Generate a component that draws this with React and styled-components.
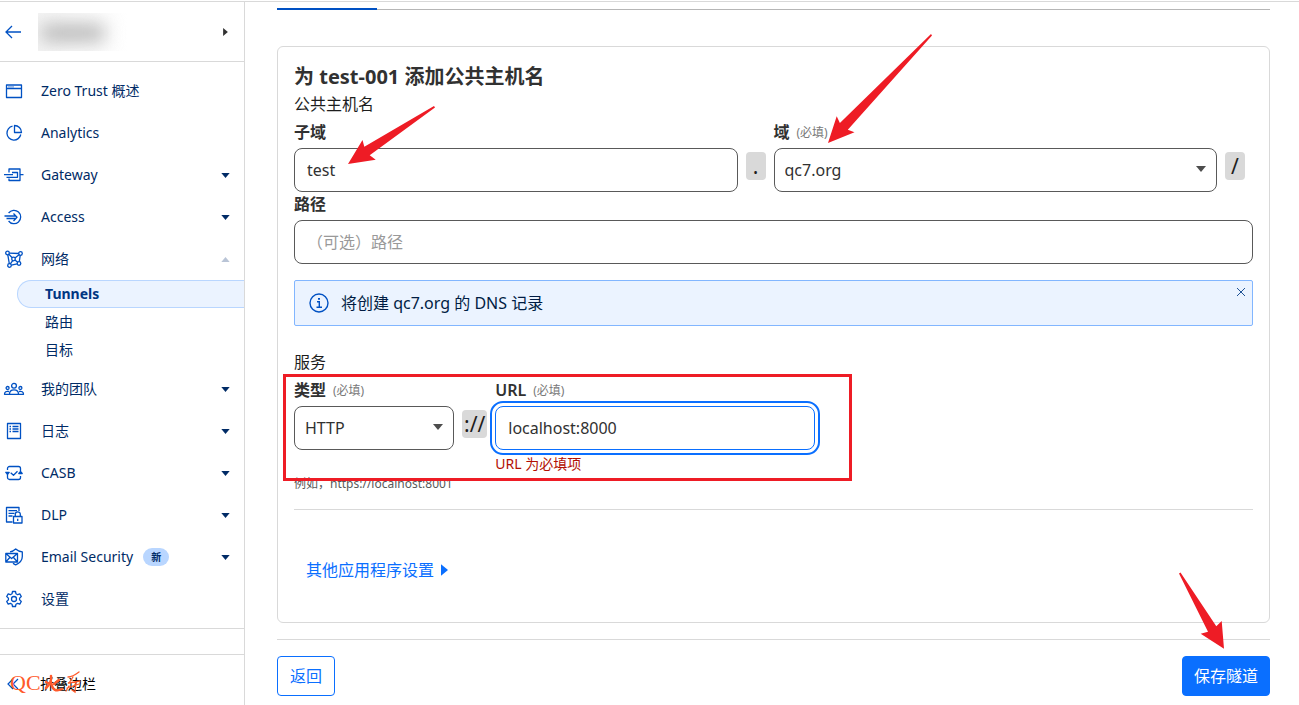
import styled, { createGlobalStyle } from "styled-components";

const GlobalStyle = createGlobalStyle`
  *, *::before, *::after {
    box-sizing: border-box;
  }
  body {
    margin: 0;
    background: #fff;
    color: #313131;
    font-family: "Noto Sans", "Noto Sans CJK SC", sans-serif;
    font-size: 16px;
    line-height: 24px;
  }
  button, input, select {
    font: inherit;
    color: inherit;
  }
  h1, h2, p, ul, hr {
    margin: 0;
    padding: 0;
  }
  ul {
    list-style: none;
  }
`;

const Page = styled.div`
  display: flex;
  min-height: 100vh;
  padding-top: 1px;
`;

/************** Sidebar **************/
const Sidebar = styled.aside`
  display: flex;
  flex-direction: column;
  flex: 0 0 245px;
  border-top: 1px solid #d9d9d9;
  border-right: 1px solid #d9d9d9;
  color: #002b66;
  font-size: 14px;
  line-height: 20px;
`;

const AccountBar = styled.div`
  display: flex;
  align-items: center;
  justify-content: space-between;
  height: 60px;
  padding: 0 16px 0 5px;
  border-bottom: 1px solid #d9d9d9;
`;

const IconButton = styled.button`
  display: flex;
  padding: 0;
  border: 0;
  background: none;
  color: ${({ $color }) => $color || "#0051c3"};
  cursor: pointer;
`;

const AccountName = styled.div`
  flex: 1;
  height: 38px;
  margin: 0 16px;
  overflow: hidden;
  background: linear-gradient(90deg, #f4f4f4, #fff 90px);
  &::before {
    content: "";
    display: block;
    width: 62px;
    height: 16px;
    margin: 12px 4px;
    background: #b3b3b3;
    filter: blur(9px);
  }
`;

const NavList = styled.ul`
  padding: 8px 0;
  border-bottom: 1px solid #d9d9d9;
`;

const NavLink = styled.a`
  display: flex;
  align-items: center;
  height: 42px;
  padding: 0 14px 0 5px;
  color: inherit;
  text-decoration: none;
  & .icon {
    flex: none;
    margin-right: 18px;
    overflow: visible;
    color: #0051c3;
  }
  & .caret {
    width: 9px;
    height: 5px;
    margin-left: auto;
  }
`;

const SubList = styled.ul`
  margin-bottom: 4px;
  padding-left: 17px;
`;

const SubLink = styled.a`
  display: flex;
  align-items: center;
  height: 28px;
  padding-left: 27px;
  border: 1px solid ${({ $active }) => ($active ? "#b9d6ff" : "transparent")};
  border-right: 0;
  border-radius: 14px 0 0 14px;
  background: ${({ $active }) => ($active ? "#ebf3ff" : "transparent")};
  color: ${({ $active }) => ($active ? "#003682" : "#002b66")};
  font-weight: ${({ $active }) => ($active ? 700 : 400)};
  text-decoration: none;
`;

const NewBadge = styled.span`
  margin-left: 10px;
  padding: 0 8px;
  border-radius: 9px;
  background: #b9d6ff;
  font-size: 10px;
  font-weight: 700;
  line-height: 18px;
`;

const SidebarFooter = styled.div`
  position: relative;
  flex: 1;
  margin-top: 25px;
  padding: 19px 7px 0;
  border-top: 1px solid #d9d9d9;
`;

const CollapseButton = styled.button`
  display: flex;
  align-items: center;
  gap: 18px;
  padding: 0;
  border: 0;
  background: none;
  color: #000;
  cursor: pointer;
  & svg {
    color: #0051c3;
  }
`;

const Watermark = styled.div`
  position: absolute;
  top: 13px;
  left: 10px;
  display: flex;
  align-items: center;
  color: #ff5a2b;
  font-family: "Liberation Serif", serif;
  font-size: 22px;
  line-height: 30px;
  pointer-events: none;
`;

/************** Main form **************/
const Main = styled.main`
  flex: 1;
  min-width: 0;
  padding: 0 29px 0 32px;
  border-top: 1px solid #d9d9d9;
`;

const TabBar = styled.div`
  height: 8px;
  border-bottom: 1px solid #b6b6b6;
  &::before {
    content: "";
    display: block;
    width: 100px;
    height: 8px;
    border-bottom: 2px solid #0051c3;
  }
`;

const Card = styled.section`
  margin-top: 36px;
  padding: 16px 16px 40px;
  border: 1px solid #d9d9d9;
  border-radius: 6px;
`;

const Title = styled.h1`
  margin-bottom: 1px;
  font-size: 20px;
  font-weight: 700;
  line-height: 28px;
`;

const SectionName = styled.p`
  color: #1d1d1d;
  padding-top: ${({ $top }) => $top || 0}px;
  padding-bottom: 4px;
`;

const FieldRow = styled.div`
  position: relative;
  display: flex;
  align-items: flex-start;
  gap: 8px;
  padding-right: ${({ $right }) => $right || 0}px;
`;

const Field = styled.div`
  position: relative;
  flex: ${({ $width }) => ($width ? `0 0 ${$width}px` : "1 1 0")};
  min-width: 0;
`;

const Label = styled.label`
  display: flex;
  align-items: center;
  gap: 7px;
  height: 28px;
  padding-bottom: 4px;
  font-weight: 600;
  & span {
    padding-top: 2px;
    color: #797979;
    font-size: 12px;
    font-weight: 400;
  }
`;

const TextInput = styled.input`
  display: block;
  width: 100%;
  height: 44px;
  padding: 0 12px;
  border: 1px solid ${({ $focused }) => ($focused ? "#0a6fff" : "#595959")};
  border-radius: 8px;
  outline: ${({ $focused }) => ($focused ? "2px solid #0a6fff" : "none")};
  outline-offset: 3px;
  background: #fff;
  &::placeholder {
    color: #999;
    opacity: 1;
  }
`;

const SelectBox = styled.div`
  position: relative;
  & select {
    display: block;
    width: 100%;
    height: 44px;
    padding: 0 32px 0 10px;
    border: 1px solid #595959;
    border-radius: 8px;
    background: #fff;
    appearance: none;
  }
  & svg {
    position: absolute;
    top: 18px;
    right: 11px;
    color: #4d4d4d;
    pointer-events: none;
  }
`;

const Separator = styled.span`
  min-width: 20px;
  height: 28px;
  margin-top: 32px;
  padding: 0 2px;
  border-radius: 4px;
  background: #d9d9d9;
  color: #1d1d1d;
  font-size: 21px;
  line-height: 28px;
  text-align: center;
`;

const Notice = styled.div`
  display: flex;
  align-items: flex-start;
  gap: 12px;
  margin-top: 16px;
  padding: 6px 6px 6px 14px;
  border: 1px solid #82b6ff;
  border-radius: 2px;
  background: #ebf3ff;
  color: #001c43;
  & p {
    flex: 1;
    padding: 4px 0;
  }
  & > svg {
    margin-top: 6px;
    color: #0051c3;
  }
`;

const ErrorText = styled.p`
  padding-top: 4px;
  color: #b20f03;
  font-size: 14px;
  line-height: 20px;
`;

const Hint = styled.p`
  color: #595959;
  font-size: 12px;
  line-height: 20px;
`;

const Divider = styled.hr`
  height: 1px;
  margin-top: ${({ $top }) => $top}px;
  border: 0;
  background: #d9d9d9;
`;

const MoreButton = styled.button`
  display: flex;
  align-items: center;
  gap: 7px;
  margin-top: 48px;
  padding: 0 12px;
  border: 0;
  background: none;
  color: #0a6fff;
  cursor: pointer;
`;

const Actions = styled.div`
  position: relative;
  display: flex;
  justify-content: space-between;
  padding-top: 16px;
`;

const Button = styled.button`
  height: 40px;
  padding: 0 ${({ $primary }) => ($primary ? 11 : 12)}px;
  border: 1px solid #0a6fff;
  border-radius: 4px;
  background: ${({ $primary }) => ($primary ? "#0a6fff" : "#fff")};
  color: ${({ $primary }) => ($primary ? "#fff" : "#0a6fff")};
  cursor: pointer;
`;

/************** Annotations over the form **************/
const Highlight = styled.div`
  position: absolute;
  top: -4px;
  left: -11px;
  width: 569px;
  height: 107px;
  border: 3px solid #ee1c25;
  pointer-events: none;
`;

const Arrow = styled.svg`
  position: absolute;
  z-index: 1;
  top: ${({ $top }) => $top}px;
  left: ${({ $left }) => ($left === undefined ? "auto" : `${$left}px`)};
  right: ${({ $right }) => ($right === undefined ? "auto" : `${$right}px`)};
  fill: #ee1c25;
  pointer-events: none;
`;

const icons = {
  window: (
    <>
      <path d="M1.500 3h15v12.500h-15zM1.500 6.500h15" />
      <path d="M3.500 4.800h1M5.500 4.800h1M7.500 4.800h1" />
    </>
  ),
  chart: (
    <>
      <path d="M7.500 2.200A7 7 0 1 0 15.800 10.500" />
      <path d="M9.500 1.500v7h7a7 7 0 0 0-7-7z" />
    </>
  ),
  gateway: (
    <path d="M4 6.500V3h11v11.500H4V12.500M15 8.700h3.500M-1 8.700H8M1.500 11.300h11V6.500H7" />
  ),
  access: (
    <>
      <path d="M3.600 5A6.700 6.700 0 1 1 3.600 13" />
      <path d="M-.5 8H11M1.500 10.500H11M8.500 5.500 12 9.200 8.500 13" />
    </>
  ),
  network: (
    <>
      <circle cx="2.500" cy="3" r="1.800" />
      <circle cx="15.500" cy="3.500" r="1.800" />
      <circle cx="14" cy="13.500" r="1.800" />
      <circle cx="4.500" cy="15.500" r="1.800" />
      <circle cx="8.500" cy="9" r="1.800" />
      <path d="M4.300 3.100 13.700 3.500M2.800 4.800 4.300 13.700M15.200 5.300 14.300 11.700M6.300 15.100 12.200 13.900M3.900 4.300 7.200 7.700M14 4.700 10 7.900M10 10 12.600 12.300M7.700 10.700 5.300 13.900" />
    </>
  ),
  team: (
    <>
      <circle cx="9" cy="5.800" r="2.400" />
      <circle cx="2.600" cy="8" r="1.500" />
      <circle cx="15.400" cy="8" r="1.500" />
      <path d="M4.500 14.300c0-3 1.900-4.400 4.500-4.400s4.500 1.400 4.500 4.400zM4 11.500C1.200 10.900-.5 12-.5 14.300H4.500M14 11.500c2.800-.6 4.500.5 4.500 2.800H13.500" />
    </>
  ),
  logs: (
    <>
      <path d="M2.500 1.500h13v15h-13z" />
      <path d="M4.500 4.500h1.500M7.500 4.500h6M4.500 7h1.500M7.500 7h6M4.500 9.500h1.500M7.500 9.500h6" />
    </>
  ),
  casb: (
    <>
      <path d="M2.500 6V4.500a2 2 0 0 1 2-2h9a2 2 0 0 1 2 2V7M15.500 12v1.500a2 2 0 0 1-2 2h-9a2 2 0 0 1-2-2V8" />
      <path d="M.8 8.300h3.400L2.500 10.300zM13.800 9.500h3.400L15.500 7.500zM5.700 8.700l2.800 2.600L12.500 7.300" />
    </>
  ),
  dlp: (
    <>
      <path d="M7.500 16H1.500V1.500h12.500V5M3.500 4.700h8.500M3.500 7.300h6M3.500 10h4" />
      <path d="M8.500 10.500h8.500v6.500h-8.500zM10.300 10.500V8.300a2.500 2.500 0 0 1 5 0v2.200M12.700 12.700v2.300" />
    </>
  ),
  email: (
    <>
      <path d="M.8 5.500h11.700v8.500H.8zM.8 5.500l5.800 5 5.900-5M.8 14l4.200-4.700M12.500 14l-4.200-4.700" />
      <path d="M5 3.800c2.500-.3 4-1.200 5.700-2.800C12.500 2.700 14.300 3.500 17.300 3.800v4.700c0 4-2.500 6.500-6.600 8.300-1-.4-2-1-2.700-1.600" />
    </>
  ),
  settings: (
    <>
      <circle cx="9" cy="9" r="2.500" />
      <path d="M7.500 1.500h3l.5 2.300 1.600.9 2.200-.8 1.500 2.600-1.700 1.600v1.800l1.700 1.600-1.500 2.600-2.200-.8-1.600.9-.5 2.300h-3L7 14.200l-1.600-.9-2.200.8-1.500-2.600 1.700-1.600V8.100L1.700 6.500l1.500-2.600 2.200.8L7 3.800z" />
    </>
  ),
};

function NavIcon({ name }) {
  return (
    <svg
      className="icon"
      width="18"
      height="18"
      viewBox="0 0 18 18"
      fill="none"
      stroke="currentColor"
      strokeWidth="1.3"
      strokeLinejoin="round"
      aria-hidden="true"
    >
      {icons[name]}
    </svg>
  );
}

function CaretDown() {
  return (
    <svg className="caret" width="10" height="6" viewBox="0 0 10 6" aria-hidden="true">
      <path d="M0 0h10L5 6z" fill="currentColor" />
    </svg>
  );
}

function CaretUp() {
  return (
    <svg className="caret" width="10" height="6" viewBox="0 0 10 6" aria-hidden="true">
      <path d="M0 6h10L5 0z" fill="#b9c4d6" />
    </svg>
  );
}

function CaretRight({ width = 6, height = 10 }) {
  return (
    <svg width={width} height={height} viewBox="0 0 6 10" aria-hidden="true">
      <path d="M0 0l6 5-6 5z" fill="currentColor" />
    </svg>
  );
}

const navItems = [
  { icon: "window", label: "Zero Trust 概述" },
  { icon: "chart", label: "Analytics" },
  { icon: "gateway", label: "Gateway", expandable: true },
  { icon: "access", label: "Access", expandable: true },
  { icon: "network", label: "网络", children: ["Tunnels", "路由", "目标"] },
  { icon: "team", label: "我的团队", expandable: true },
  { icon: "logs", label: "日志", expandable: true },
  { icon: "casb", label: "CASB", expandable: true },
  { icon: "dlp", label: "DLP", expandable: true },
  { icon: "email", label: "Email Security", badge: "新", expandable: true },
  { icon: "settings", label: "设置" },
];

function SideNav() {
  return (
    <Sidebar>
      <AccountBar>
        <IconButton type="button" aria-label="返回">
          <svg width="17" height="14" viewBox="0 0 17 14" fill="none" stroke="currentColor" strokeWidth="1.3">
            <path d="M16 7H1M7 1 1 7l6 6" />
          </svg>
        </IconButton>
        <AccountName />
        <IconButton type="button" aria-label="切换帐户" $color="#313131">
          <CaretRight width={5} height={8} />
        </IconButton>
      </AccountBar>
      <nav>
        <NavList>
          {navItems.map((item) => (
            <li key={item.label}>
              <NavLink href="#">
                <NavIcon name={item.icon} />
                {item.label}
                {item.badge && <NewBadge>{item.badge}</NewBadge>}
                {item.expandable && <CaretDown />}
                {item.children && <CaretUp />}
              </NavLink>
              {item.children && (
                <SubList>
                  {item.children.map((child, i) => (
                    <li key={child}>
                      <SubLink href="#" $active={i === 0}>
                        {child}
                      </SubLink>
                    </li>
                  ))}
                </SubList>
              )}
            </li>
          ))}
        </NavList>
      </nav>
      <SidebarFooter>
        <CollapseButton type="button">
          <svg width="15" height="12" viewBox="0 0 15 12" fill="none" stroke="currentColor" strokeWidth="1.2">
            <path d="M6 1 1 6l5 5M11 1 6 6l5 5" />
          </svg>
          折叠边栏
        </CollapseButton>
        <Watermark>
          QC
          <svg width="40" height="24" viewBox="0 0 40 24" fill="none" stroke="currentColor" strokeLinecap="round">
            <path d="M10 5c1 5-1 8-5 12M5 11l4 2M10 11c1 8 5 10 11 7M18 9l-5 4" strokeWidth="2.500" />
            <path d="M38 1c-4 3-7 5-11 5M32 6l-4 6 11-2M26 17l12-4M35 11l-1 10-3-2M28 15l-3 5" strokeWidth="1.300" />
          </svg>
        </Watermark>
      </SidebarFooter>
    </Sidebar>
  );
}

function App() {
  return (
    <Page>
      <GlobalStyle />
      <SideNav />
      <Main>
        <TabBar />
        <Card>
          <Title>为 test-001 添加公共主机名</Title>
          <SectionName>公共主机名</SectionName>

          {/************** Hostname **************/}
          <FieldRow $right={8}>
            <Field>
              <Label htmlFor="subdomain">子域</Label>
              <TextInput id="subdomain" defaultValue="test" />
              <Arrow $top={-15} $left={54} width="88" height="60" viewBox="348 105 88 60">
                <path d="M434 106l1 1.500L369.700 155.300l6 4.400L348 164l14.500-24 1.800 6.700z" />
              </Arrow>
            </Field>
            <Separator>.</Separator>
            <Field>
              <Label htmlFor="domain">
                域 <span>(必填)</span>
              </Label>
              <SelectBox>
                <select id="domain" defaultValue="qc7.org">
                  <option>qc7.org</option>
                </select>
                <CaretDown />
              </SelectBox>
              <Arrow $top={-87} $left={54} width="106" height="112" viewBox="828 33 106 112">
                <path d="M931 34l1 1.500-84.200 94.200 6.700 2.600L828 143l8.700-26.700 3.200 6.700z" />
              </Arrow>
            </Field>
            <Separator>/</Separator>
          </FieldRow>
          <Field>
            <Label htmlFor="path">路径</Label>
            <TextInput id="path" placeholder="（可选）路径" />
          </Field>

          <Notice role="status">
            <svg width="20" height="20" viewBox="0 0 20 20" fill="none" stroke="currentColor" strokeWidth="1.4">
              <circle cx="10" cy="10" r="9" />
              <path d="M8 8.700h2.300V14M7.500 14.300h5.500" />
              <path d="M9 5.800h2" strokeWidth="1.800" />
            </svg>
            <p>将创建 qc7.org 的 DNS 记录</p>
            <IconButton type="button" aria-label="关闭" $color="#1f5295">
              <svg width="10" height="10" viewBox="0 0 10 10" stroke="currentColor">
                <path d="M1 1l8 8M9 1 1 9" />
              </svg>
            </IconButton>
          </Notice>

          {/************** Service **************/}
          <SectionName $top={24}>服务</SectionName>
          <FieldRow>
            <Field $width={160}>
              <Label htmlFor="type">
                类型 <span>(必填)</span>
              </Label>
              <SelectBox>
                <select id="type" defaultValue="HTTP">
                  <option>HTTP</option>
                </select>
                <CaretDown />
              </SelectBox>
            </Field>
            <Separator>://</Separator>
            <Field $width={320}>
              <Label htmlFor="url">
                URL <span>(必填)</span>
              </Label>
              <TextInput id="url" defaultValue="localhost:8000" $focused />
              <ErrorText>URL 为必填项</ErrorText>
            </Field>
            <Highlight />
          </FieldRow>
          <Hint>例如，https://localhost:8001</Hint>
          <Divider $top={15} />
          <MoreButton type="button">
            其他应用程序设置
            <CaretRight width={7} height={12} />
          </MoreButton>
        </Card>
        <Divider $top={16} />

        <Actions>
          <Button type="button">返回</Button>
          <Button type="submit" $primary>
            保存隧道
          </Button>
          <Arrow $top={-68} $right={45} width="47" height="78" viewBox="1178 571 47 78">
            <path d="M1179 572.500l1.500-1 35.800 53.800 5.400-5.300 2.300 27.700-23.300-15 7.300-2z" />
          </Arrow>
        </Actions>
      </Main>
    </Page>
  );
}

export default App;
